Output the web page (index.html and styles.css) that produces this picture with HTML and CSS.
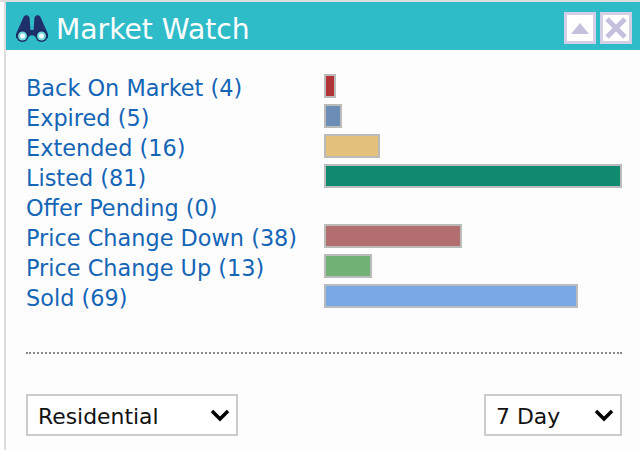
FILE: index.html
```html
<!DOCTYPE html>
<html lang="en">
<head>
    <meta charset="UTF-8">
    <title>Market Watch</title>
    <link rel="stylesheet" href="styles.css">
</head>
<body>
<div class="panel">
    <div class="panel-head">
        <svg class="binoculars" width="32" height="28" viewBox="0 0 32 28">
            <path d="M8 1 L11 0 L13.500 2 L14.500 15 L17.500 15 L18.500 2 L21 0 L24 1 L32 19 L32 23 L20 22 L16 20 L12 22 L0 23 L0 19 Z" fill="#1f2f6b"/>
            <circle cx="6.500" cy="21" r="6" fill="#1c2a5e"/>
            <circle cx="25.500" cy="21" r="6" fill="#1c2a5e"/>
            <circle cx="6.500" cy="21" r="4.500" fill="#6fd8de"/>
            <circle cx="25.500" cy="21" r="4.500" fill="#6fd8de"/>
            <circle cx="6.500" cy="21" r="2.500" fill="#f2ffff"/>
            <circle cx="25.500" cy="21" r="2.500" fill="#f2ffff"/>
        </svg>
        <h1>Market Watch</h1>
        <div class="head-btns">
            <span class="head-btn">
                <svg width="26" height="26" viewBox="0 0 26 26"><path d="M13 8 L22 19 L4 19 Z" fill="#c5c0de"/></svg>
            </span>
            <span class="head-btn">
                <svg width="26" height="26" viewBox="0 0 26 26"><path d="M4 4 L22 22 M22 4 L4 22" stroke="#c5c0de" stroke-width="5" fill="none"/></svg>
            </span>
        </div>
    </div>
    <div class="panel-body">
        <ul class="stats">
            <li><a href="#">Back On Market (4)</a><span class="bar bar-red" style="width:12px"></span></li>
            <li><a href="#">Expired (5)</a><span class="bar bar-blue" style="width:18px"></span></li>
            <li><a href="#">Extended (16)</a><span class="bar bar-tan" style="width:56px"></span></li>
            <li><a href="#">Listed (81)</a><span class="bar bar-green" style="width:298px"></span></li>
            <li><a href="#">Offer Pending (0)</a></li>
            <li><a href="#">Price Change Down (38)</a><span class="bar bar-rose" style="width:138px"></span></li>
            <li><a href="#">Price Change Up (13)</a><span class="bar bar-lime" style="width:48px"></span></li>
            <li><a href="#">Sold (69)</a><span class="bar bar-sky" style="width:254px"></span></li>
        </ul>
        <div class="filters">
            <select class="type-select">
                <option>Residential</option>
            </select>
            <select class="day-select">
                <option>7 Day</option>
            </select>
        </div>
    </div>
</div>
</body>
</html>
```

FILE: styles.css
```css
* {
    margin: 0;
    padding: 0;
    box-sizing: border-box;
}

body {
    width: 640px;
    height: 450px;
    overflow: hidden;
    padding-left: 4px;
    background-color: #fff;
    border-top: 2px solid #ddd;
    font-family: "DejaVu Sans", Verdana, sans-serif;
}

.panel {
    height: 448px;
    background-color: #fdfdfd;
    border-left: 2px solid #ddd;
}

.panel-head {
    height: 48px;
    display: flex;
    align-items: center;
    padding: 4px 0 0 10px;
    background-color: #2fbcc9;
}

.binoculars {
    margin: 2px 8px 0 0;
}

.panel-head h1 {
    padding-top: 2px;
    font-size: 28.200px;
    font-weight: normal;
    color: #fff;
}

.head-btns {
    display: flex;
    gap: 4px;
    margin-left: auto;
    margin-right: 8px;
}

.head-btn {
    width: 32px;
    height: 32px;
    display: flex;
    align-items: center;
    justify-content: center;
    background-color: #fff;
    border: 3px solid #d2cfe6;
}

.panel-body {
    padding: 21px 18px 0 20px;
}

.stats {
    list-style: none;
    height: 283px;
    border-bottom: 2px dotted #888;
}

.stats li {
    height: 30px;
    display: flex;
    align-items: center;
}

.stats a {
    width: 298px;
    padding-top: 4px;
    font-size: 22.400px;
    color: #1565b7;
    text-decoration: none;
}

.bar {
    height: 24px;
    border: 2px solid #bbb;
}

.bar-red { background-color: #b23338; }
.bar-blue { background-color: #6c8db5; }
.bar-tan { background-color: #e5c27c; }
.bar-green { background-color: #0f8a6f; }
.bar-rose { background-color: #b36f6f; }
.bar-lime { background-color: #73b277; }
.bar-sky { background-color: #7aa7e6; }

.filters {
    display: flex;
    justify-content: space-between;
    margin-top: 40px;
}

.filters select {
    height: 42px;
    padding: 3px 0 0 10px;
    font-family: inherit;
    font-size: 21.900px;
    color: #111;
    border: 2px solid #ccc;
    border-radius: 0;
    outline: none;
    appearance: none;
    background-color: #fff;
    background-image: url("data:image/svg+xml,%3Csvg xmlns='http://www.w3.org/2000/svg' width='20' height='13'%3E%3Cpath d='M2 2 L10 10 L18 2' stroke='%23000' stroke-width='3.500' fill='none'/%3E%3C/svg%3E");
    background-repeat: no-repeat;
    background-position: right 6px center;
}

.type-select {
    width: 212px;
}

.day-select {
    width: 138px;
}
```
